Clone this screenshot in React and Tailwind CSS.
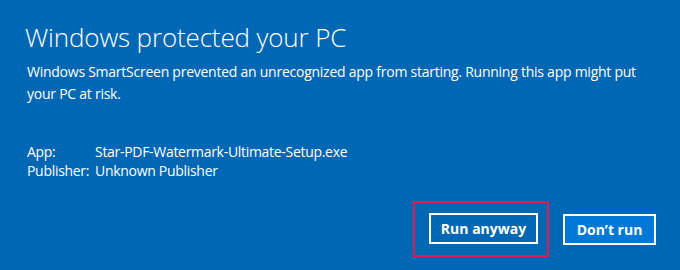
import React from 'react';

function App() {
  return (
    <div
      className="w-[680px] h-[270px] bg-[#0067b4] text-white overflow-hidden flex flex-col"
      style={{ fontFamily: '"Open Sans", "Noto Sans", sans-serif' }}
    >
      {/* Heading and message */}
      <div className="pl-[25px] pr-8 pt-[19px]">
        <h1 className="text-[26px] leading-[36px] font-light tracking-[-0.15px]">Windows protected your PC</h1>
        <p className="mt-[6px] pl-[2px] text-[14px] leading-[22px] tracking-[-0.25px]">
          Windows SmartScreen prevented an unrecognized app from starting. Running this app might put your PC at risk.
        </p>
      </div>

      {/* App details */}
      <div className="pl-[27px] mt-[37px] text-[14px] leading-[19px] tracking-[-0.3px]">
        <div className="flex">
          <span className="w-[68px]">App:</span>
          <span>Star-PDF-Watermark-Ultimate-Setup.exe</span>
        </div>
        <div className="flex">
          <span className="w-[68px]">Publisher:</span>
          <span>Unknown Publisher</span>
        </div>
      </div>

      {/* Actions */}
      <div className="flex justify-end items-center gap-[14px] pr-[24px] mt-[21px]">
        <div className="border-2 border-[#e8164a] p-[10px_9px_11px_14px]">
          <button className="w-[109px] h-[31px] border-2 border-white text-[14px] font-bold">
            Run anyway
          </button>
        </div>
        <button className="w-[93px] h-[31px] border-2 border-white bg-[#0078d7] text-[14px] font-bold">
          Don’t run
        </button>
      </div>
    </div>
  );
}

export default App;
